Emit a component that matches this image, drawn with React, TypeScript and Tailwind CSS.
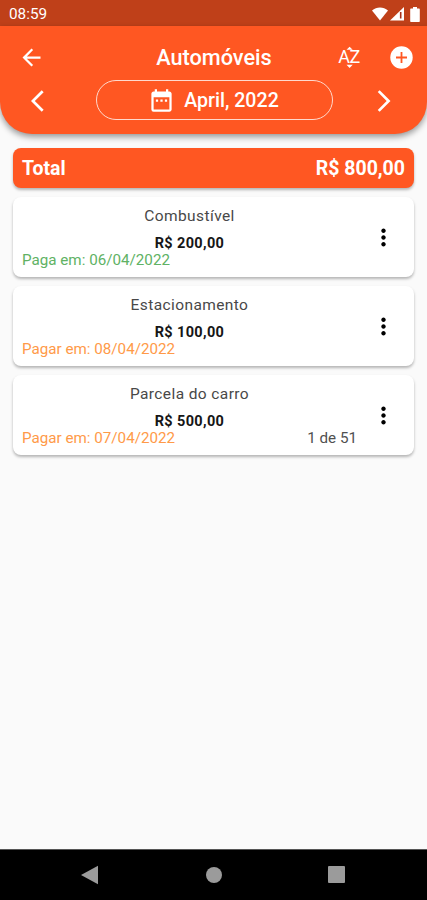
import { MdArrowBack, MdArrowBackIos, MdArrowForwardIos, MdDateRange, MdMoreVert } from 'react-icons/md';

interface Expense {
  name: string;
  amount: string;
  due: string;
  paid: boolean;
  installment?: string;
}

const expenses: Expense[] = [
  { name: 'Combustível', amount: 'R$ 200,00', due: 'Paga em: 06/04/2022', paid: true },
  { name: 'Estacionamento', amount: 'R$ 100,00', due: 'Pagar em: 08/04/2022', paid: false },
  { name: 'Parcela do carro', amount: 'R$ 500,00', due: 'Pagar em: 07/04/2022', paid: false, installment: '1 de 51' },
];

function StatusBar() {
  return (
    <div className="flex h-[26px] items-center justify-between bg-[#bf4019] pl-[9px] pr-[7px] pt-[2px] text-white">
      <span className="pt-[2px] text-[15.3px] leading-none">08:59</span>
      <div className="flex items-center">
        <svg width="16" height="14" viewBox="0 0 16 14" fill="currentColor">
          <path d="M0 3.6C4.6-.5 11.4-.5 16 3.6L8 13.6z" />
        </svg>
        <svg className="ml-[2px]" width="15" height="14" viewBox="0 0 15 14">
          <path d="M0 13.5L14 0v13.5z" fill="currentColor" />
          <path d="M10.7 5v6.5" stroke="#a8301a" strokeWidth="1.6" />
        </svg>
        <svg className="ml-[5px]" width="10" height="15" viewBox="0 0 10 15" fill="currentColor">
          <path d="M3 0h4v1.6h1.8c.6 0 1 .4 1 1V14c0 .6-.4 1-1 1H1.2c-.6 0-1-.4-1-1V2.6c0-.6.4-1 1-1H3z" />
        </svg>
      </div>
    </div>
  );
}

function SortIcon() {
  return (
    <div className="relative flex h-[26px] w-[26px] items-center justify-center text-[18px] leading-none">
      <span className="tracking-[-0.5px]">AZ</span>
      <svg className="absolute inset-0" width="26" height="26" viewBox="0 0 26 26" fill="currentColor">
        <path d="M10.500 5.800L13.600 2.700l3.100 3.100zM10.500 20.800h6.200l-3.100 3.100z" />
      </svg>
    </div>
  );
}

function AddIcon() {
  return (
    <svg width="27" height="27" viewBox="0 0 27 27">
      <circle cx="13.5" cy="13.5" r="11.2" fill="currentColor" />
      <path d="M13.5 8v11M8 13.5h11" stroke="#ff5722" strokeWidth="1.8" />
    </svg>
  );
}

function Header() {
  return (
    <header className="h-[108px] rounded-b-[32px] bg-[#ff5722] text-white shadow-[0_3px_6px_rgba(0,0,0,0.4)]">
      <div className="grid h-[62px] grid-cols-[1fr_auto_1fr] items-center pl-[18px] pr-3">
        <button className="justify-self-start">
          <MdArrowBack size={27} />
        </button>
        <h1 className="pr-[5px] pt-[2px] text-[21.7px] font-medium leading-none">Automóveis</h1>
        <div className="flex items-center gap-[26px] justify-self-end">
          <SortIcon />
          <AddIcon />
        </div>
      </div>
      <div className="-mt-[8px] flex items-center justify-between pl-[31px] pr-[30px]">
        <button className="pt-px">
          <MdArrowBackIos size={26} />
        </button>
        <button className="flex h-10 w-[237px] items-center justify-center gap-[9px] rounded-full border border-[#ffd9cd] pr-px">
          <MdDateRange size={27} />
          <span className="pt-[2px] text-[19.6px] font-medium leading-none">April, 2022</span>
        </button>
        <button className="pt-px">
          <MdArrowForwardIos size={26} />
        </button>
      </div>
    </header>
  );
}

function ExpenseCard({ expense }: { expense: Expense }) {
  return (
    <li className="flex h-[80px] rounded-lg bg-white pl-[9px] shadow-[0_2px_3px_rgba(0,0,0,0.28)]">
      <div className="flex w-[335px] flex-col pt-[8px]">
        <p className="text-center text-[15.5px] leading-[22px] tracking-[0.4px] text-[#484848]">{expense.name}</p>
        <p className="mt-[8px] text-center text-[14.5px] font-bold leading-[18px] tracking-[0.35px] text-[#161616]">
          {expense.amount}
        </p>
        <div className="-mt-[2px] flex justify-between text-[15.2px] leading-[19px]">
          <span className={expense.paid ? 'text-[#60b264]' : 'text-[#ff9a48]'}>{expense.due}</span>
          {expense.installment && <span className="text-[#505050]">{expense.installment}</span>}
        </div>
      </div>
      <button className="flex flex-1 items-center justify-center pr-[4px] text-black">
        <MdMoreVert size={27} />
      </button>
    </li>
  );
}

function NavigationBar() {
  return (
    <nav className="flex h-[51px] items-center justify-between border-t border-[#555] bg-black pl-[81px] pr-[82px] pb-px text-[#9b9b9b]">
      <svg width="18" height="20" viewBox="0 0 18 20" fill="currentColor">
        <path d="M0 10L17 .8v18.4z" />
      </svg>
      <span className="size-4 rounded-full bg-current" />
      <span className="size-[17px] rounded-[1px] bg-current" />
    </nav>
  );
}

export default function App() {
  return (
    <div className="flex h-[900px] w-[427px] flex-col overflow-hidden bg-[#fafafa] font-['Roboto',sans-serif]">
      <StatusBar />
      <Header />
      <main className="flex-1 px-[13px] pt-[14px]">
        <div className="flex h-[40px] items-center justify-between rounded-lg bg-[#ff5722] px-[9px] pt-px text-[19.5px] font-bold text-white shadow-[0_2px_3px_rgba(0,0,0,0.28)]">
          <span>Total</span>
          <span>R$ 800,00</span>
        </div>
        <ul className="mt-[9px] flex flex-col gap-[9px]">
          {expenses.map((expense) => (
            <ExpenseCard key={expense.name} expense={expense} />
          ))}
        </ul>
      </main>
      <NavigationBar />
    </div>
  );
}
